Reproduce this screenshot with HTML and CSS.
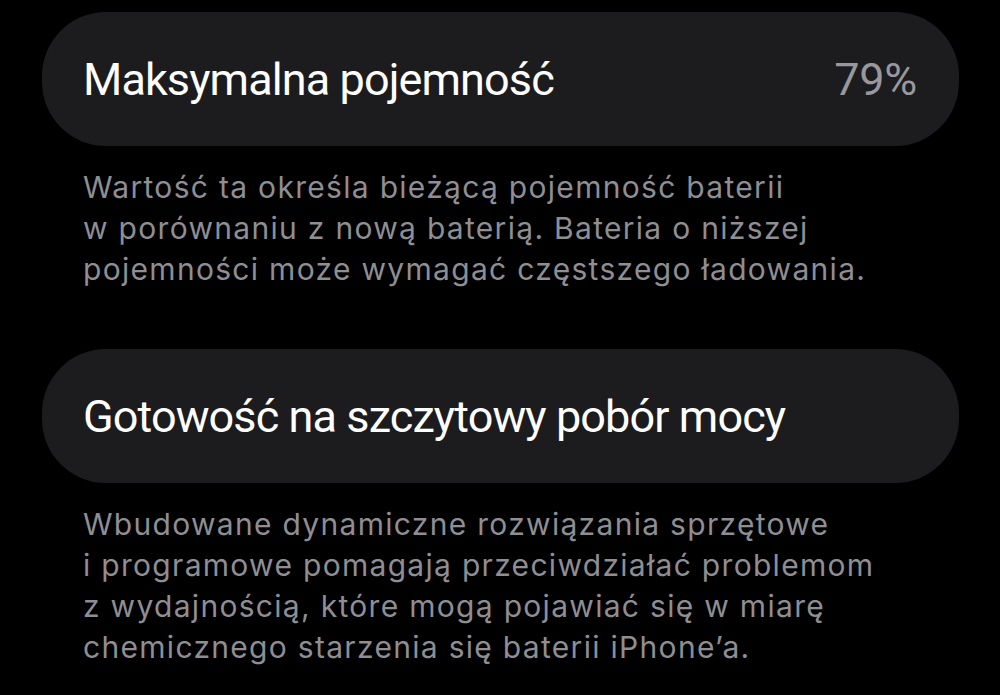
FILE: index.html
```html
<!DOCTYPE html>
<html lang="pl">
<head>
    <meta charset="UTF-8">
    <meta name="viewport" content="width=device-width, initial-scale=1.0">
    <title>Kondycja baterii</title>
    <link rel="stylesheet" href="styles.css">
</head>
<body>
    <div class="settings">
        <div class="group">
            <div class="cell">
                <span class="cell-title">Maksymalna pojemność</span>
                <span class="cell-value">79%</span>
            </div>
            <p class="footer">Wartość ta określa bieżącą pojemność baterii<br>w porównaniu z nową baterią. Bateria o niższej<br>pojemności może wymagać częstszego ładowania.</p>
        </div>

        <div class="group">
            <div class="cell">
                <span class="cell-title">Gotowość na szczytowy pobór mocy</span>
            </div>
            <p class="footer">Wbudowane dynamiczne rozwiązania sprzętowe<br>i programowe pomagają przeciwdziałać problemom<br>z wydajnością, które mogą pojawiać się w miarę<br>chemicznego starzenia się baterii iPhone’a.</p>
        </div>
    </div>
</body>
</html>
```

FILE: styles.css
```css
body {
    margin: 0;
    background-color: #000;
    font-family: Inter, "Noto Sans", sans-serif;
}

.settings {
    display: flex;
    flex-direction: column;
    gap: 59px;
    padding: 12px 41px 0 42px;
}

.cell {
    display: flex;
    align-items: center;
    justify-content: space-between;
    height: 134px;
    padding: 0 42px 0 41px;
    background-color: #1c1c1e;
    border-radius: 64px;
}

.cell-title {
    color: #fff;
    font-family: Roboto, sans-serif;
    font-size: 45px;
    letter-spacing: -0.9px;
}

.cell-value {
    color: #98989e;
    font-family: Roboto, sans-serif;
    font-size: 45px;
    letter-spacing: -0.3px;
}

.footer {
    margin: 0;
    padding: 21px 41px 0 41px;
    color: #8e8e93;
    font-size: 30px;
    line-height: 41px;
    letter-spacing: 1.3px;
}
```
